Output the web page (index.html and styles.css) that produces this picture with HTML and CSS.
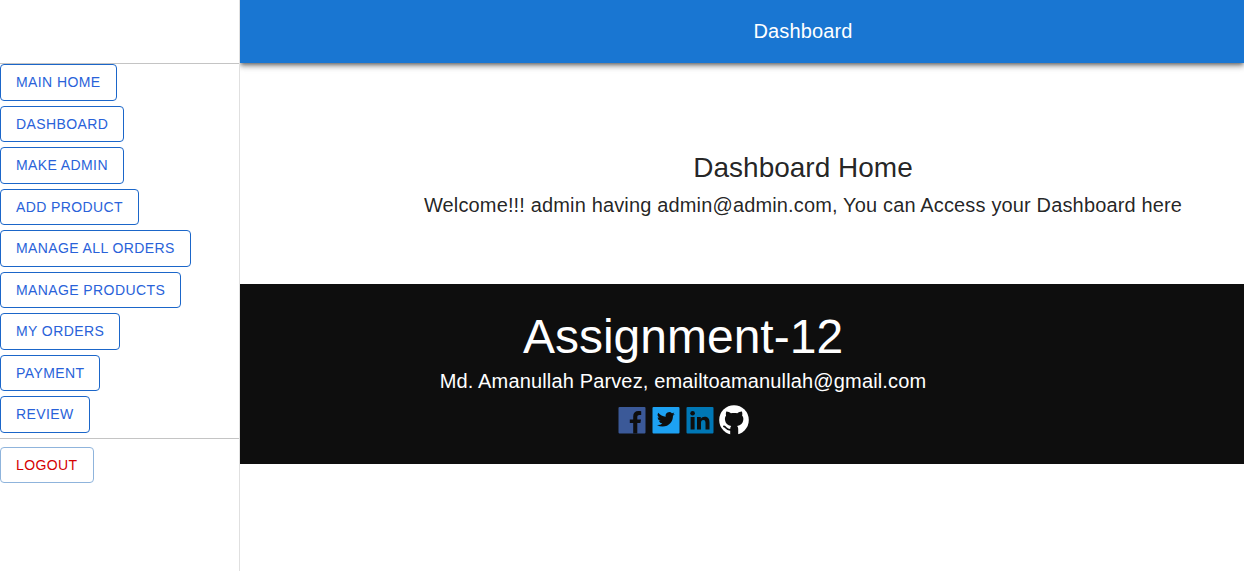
FILE: index.html
```html
<!DOCTYPE html>
<html lang="en">
<head>
<meta charset="utf-8">
<meta name="viewport" content="width=device-width, initial-scale=1">
<title>Dashboard</title>
<link rel="stylesheet" href="styles.css">
</head>
<body>
<div class="layout">
  <aside class="drawer">
    <div class="drawer-toolbar"></div>
    <nav class="menu" aria-label="Dashboard">
      <button type="button" class="btn">Main Home</button>
      <button type="button" class="btn">Dashboard</button>
      <button type="button" class="btn">Make Admin</button>
      <button type="button" class="btn">Add Product</button>
      <button type="button" class="btn">Manage All Orders</button>
      <button type="button" class="btn">Manage Products</button>
      <button type="button" class="btn">My Orders</button>
      <button type="button" class="btn">Payment</button>
      <button type="button" class="btn">Review</button>
    </nav>
    <div class="session">
      <button type="button" class="btn btn-logout">Logout</button>
    </div>
  </aside>
  <div class="page">
    <header class="appbar"><h1 class="appbar-title">Dashboard</h1></header>
    <main class="content">
      <h2 class="content-title">Dashboard Home</h2>
      <p class="content-text">Welcome!!! admin having admin@admin.com, You can Access your Dashboard here</p>
    </main>
    <footer class="footer">
      <h2 class="footer-title">Assignment-12</h2>
      <p class="footer-text">Md. Amanullah Parvez, emailtoamanullah@gmail.com</p>
      <div class="social">
        <a href="#facebook" aria-label="Facebook"><svg class="icon" viewBox="0 0 30 30"><rect x="1.5" y="2" width="27" height="26.5" rx="1" fill="#3b5998"/><path fill="#0e0e0e" d="M20.3 28.5V18.1H23.4L24 14.4H20.3V12.2C20.3 10.8 20.9 10 22.4 10H24.2V6.3C23.6 6.2 22.5 6.1 21.4 6.1C18.1 6.1 16.2 8 16.2 11.4V14.4H12.8V18.1H16.2V28.5Z"/></svg></a>
        <a href="#twitter" aria-label="Twitter"><svg class="icon" viewBox="0 0 30 30"><rect x="1.5" y="2" width="27" height="26.5" rx="1" fill="#1da1f2"/><path fill="#0e0e0e" transform="translate(6 5.5) scale(.74)" d="M23.95 4.57a10 10 0 0 1-2.82.77 4.96 4.96 0 0 0 2.16-2.72c-.95.55-2 .96-3.13 1.18a4.92 4.92 0 0 0-8.38 4.48A13.93 13.93 0 0 1 1.64 3.16a4.92 4.92 0 0 0 1.52 6.57 4.9 4.9 0 0 1-2.23-.61v.06a4.92 4.92 0 0 0 3.95 4.83 5 5 0 0 1-2.22.08 4.94 4.94 0 0 0 4.6 3.42A9.87 9.87 0 0 1 0 19.54a13.99 13.99 0 0 0 7.56 2.21c9.05 0 14-7.5 14-13.98 0-.21 0-.42-.02-.63a9.94 9.94 0 0 0 2.41-2.57z"/></svg></a>
        <a href="#linkedin" aria-label="LinkedIn"><svg class="icon" viewBox="0 0 30 30"><rect x="1.5" y="2" width="27" height="26.5" rx="1" fill="#0077b5"/><g fill="#0e0e0e"><circle cx="7.6" cy="8.2" r="2.3"/><path d="M5.6 12.1H9.6V24.6H5.6ZM12 12.1H15.8V13.8C16.5 12.6 17.9 11.8 19.7 11.8C23.5 11.8 24.5 14.2 24.5 17.7V24.6H20.5V18.5C20.5 17 20.4 15.1 18.4 15.1C16.3 15.1 16 16.7 16 18.4V24.6H12Z"/></g></svg></a>
        <a href="#github" aria-label="GitHub"><svg class="icon" viewBox="0 0 30 30"><circle cx="15" cy="15" r="14.8" fill="#fff"/><path fill="#0e0e0e" d="M7.3 6.6C8.9 6.5 10.6 7.4 11.9 8.3C13.9 7.8 16.3 7.8 18.3 8.3C19.6 7.4 21.3 6.5 22.9 6.6C23.5 8.2 23.4 9.5 23.1 10.6C24.2 11.8 24.5 13.2 24.3 15C23.9 18.6 21.8 20.3 18.1 20.9C19 21.8 19.2 22.8 19.2 24.2V30H11.2V24.2C11.2 22.8 11.4 21.8 12.2 20.9C8.5 20.3 6.4 18.6 6 15C5.8 13.2 6.1 11.8 7.1 10.6C6.8 9.5 6.7 8.2 7.3 6.6Z"/><path fill="none" stroke="#0e0e0e" stroke-width="1.7" stroke-linecap="round" d="M4.9 21.3C7.2 21.7 6.9 25.3 11.6 24.9"/></svg></a>
      </div>
    </footer>
  </div>
</div>
</body>
</html>
```
FILE: styles.css
```css
* {
  box-sizing: border-box;
}

body {
  margin: 0;
  background: #fff;
  color: rgba(0, 0, 0, 0.87);
  font-family: "Liberation Sans", Arial, sans-serif;
}

h1,
h2,
p {
  margin: 0;
  font-weight: 400;
}

.layout {
  display: flex;
  min-height: 100vh;
}

.drawer {
  position: relative;
  z-index: 1;
  flex: 0 0 240px;
  border-right: 1px solid #e0e0e0;
  background: #fff;
}

.drawer-toolbar {
  height: 64px;
  border-bottom: 1px solid #c4c4c4;
}

.menu {
  display: flex;
  flex-direction: column;
  align-items: flex-start;
  gap: 5px;
  padding-bottom: 5px;
}

.session {
  padding-top: 8px;
  border-top: 1px solid #c4c4c4;
}

.btn {
  padding: 5px 15px;
  border: 1px solid #1b66c9;
  border-radius: 4px;
  background: transparent;
  color: #2962d9;
  font: inherit;
  font-size: 14px;
  line-height: 1.75;
  letter-spacing: 0.02857em;
  text-transform: uppercase;
  cursor: pointer;
}

.btn-logout {
  border-color: #8fb4dc;
  color: #d50000;
}

.page {
  flex: 1;
  min-width: 0;
}

.appbar {
  display: flex;
  justify-content: center;
  padding: 15px 0 16px 122px;
  background: #1976d2;
  color: #fff;
  box-shadow: 0 2px 4px -1px rgba(0, 0, 0, 0.5), 0 4px 5px 0 rgba(0, 0, 0, 0.2), 0 1px 10px 0 rgba(0, 0, 0, 0.14);
}

.appbar-title,
.content-text,
.footer-text {
  font-size: 20px;
  line-height: 32px;
  letter-spacing: 0.0075em;
}

.content {
  padding: 86px 0 63px 122px;
  text-align: center;
}

.content-title {
  margin-bottom: 3px;
  font-size: 28px;
  line-height: 37px;
}

.footer {
  padding: 25px 118px 27px 0;
  background: #0e0e0e;
  color: #fff;
  text-align: center;
}

.footer-title {
  font-size: 48px;
  line-height: 56px;
}

.social {
  display: flex;
  justify-content: center;
  gap: 4px;
  padding: 8px 0 2px;
}

.icon {
  display: block;
  width: 30px;
  height: 30px;
}
```
